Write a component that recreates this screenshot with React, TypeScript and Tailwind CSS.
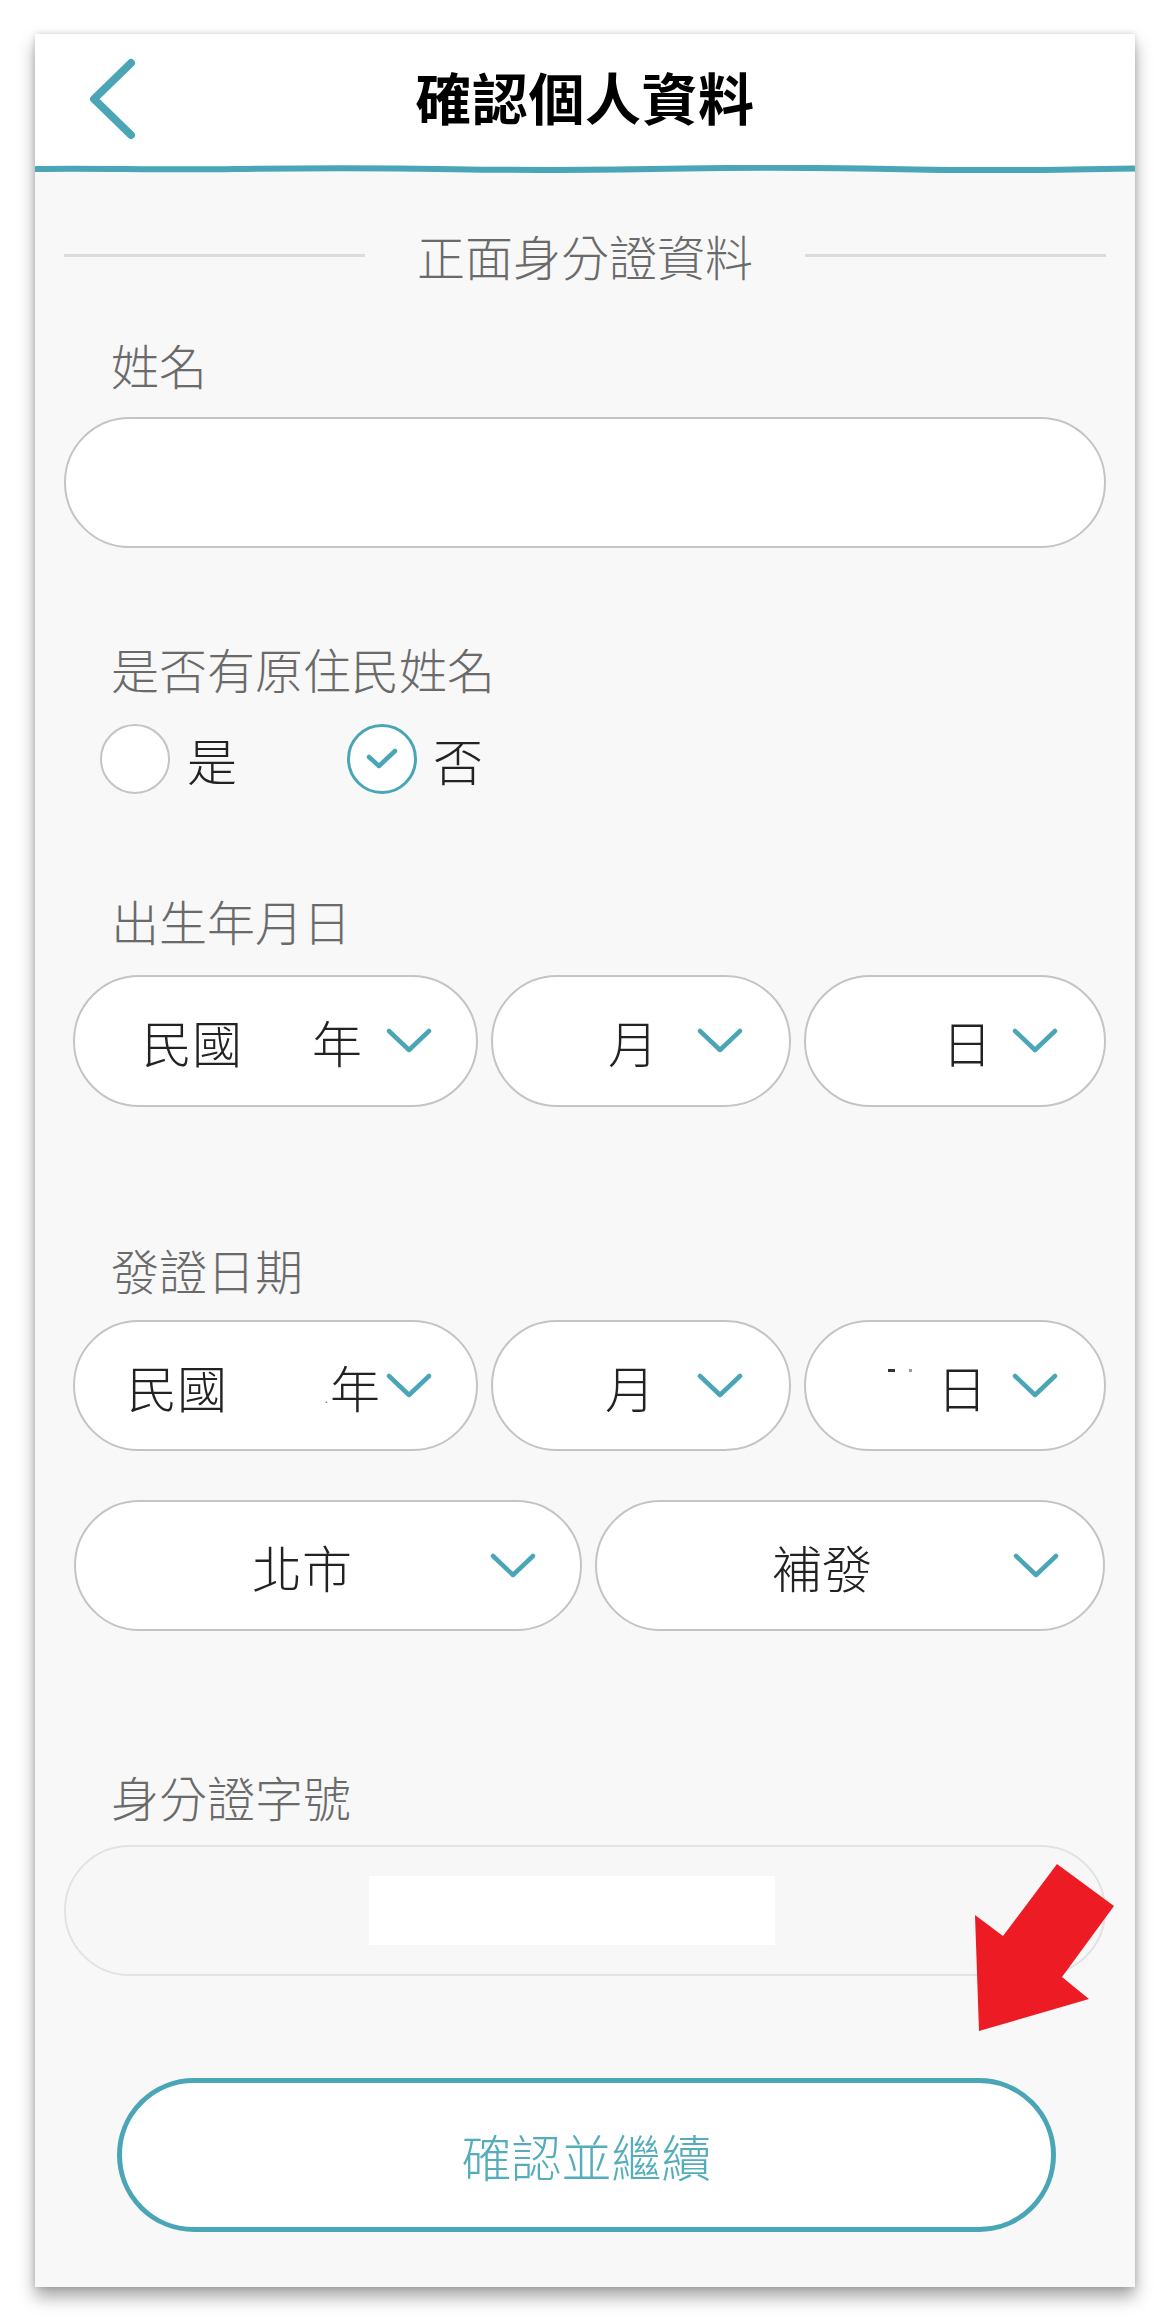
import React from "react";

const TEAL = "#4aa6b6";

function Chevron() {
  return (
    <svg width="46" height="26" viewBox="0 0 46 26" className="shrink-0">
      <path d="M3 3 L23 22 L43 3" fill="none" stroke={TEAL} strokeWidth="4.5" strokeLinecap="round" strokeLinejoin="round" />
    </svg>
  );
}

const pill = "flex items-center h-full bg-white border-2 border-[#c4c4c4] rounded-full text-[50px] leading-none text-[#222] font-[300]";
const label = "h-[50px] flex items-center pl-[47px] text-[48px] leading-none text-[#6a6a6a] font-[300]";

export default function App() {
  return (
    <div
      className="w-[1170px] h-[2324px] bg-white pt-[34px] pl-[35px]"
      style={{ fontFamily: '"Noto Sans CJK TC", "Noto Sans", sans-serif' }}
    >
      <div className="relative w-[1100px] h-[2253px] bg-[#f8f8f8] shadow-[0_10px_16px_rgba(0,0,0,0.35),0_0_6px_rgba(0,0,0,0.15)]">
        {/* header */}
        <div className="h-[134px] bg-white grid grid-cols-[1fr_auto_1fr] items-center">
          <div className="pl-[54px] -mt-[4px]">
            <svg width="48" height="82" viewBox="0 0 48 82">
              <path d="M42 5 L5 41 L42 77" fill="none" stroke={TEAL} strokeWidth="8" strokeLinecap="round" strokeLinejoin="round" />
            </svg>
          </div>
          <div className="text-[56px] font-bold text-black leading-none -mt-[10px] tracking-[0.5px]">確認個人資料</div>
          <div />
        </div>
        <svg width="1100" height="8" viewBox="0 0 1100 8" className="block -mt-[3px]" preserveAspectRatio="none">
          <path
            d="M0 4 C 60 2.8, 120 5.2, 200 4 S 330 2.6, 420 4.2 S 560 5.4, 650 3.6 S 800 2.8, 880 4.4 S 1020 5, 1100 3.4"
            fill="none"
            stroke={TEAL}
            strokeWidth="6"
          />
        </svg>

        <div className="px-[29px]">
          {/* divider */}
          <div className="mt-[57px] h-[50px] flex items-center">
            <div className="w-[301px] h-[3px] bg-[#dcdcdc]" />
            <div className="flex-1 text-center text-[48px] leading-none text-[#6a6a6a] font-[300]">正面身分證資料</div>
            <div className="w-[301px] h-[3px] bg-[#dcdcdc]" />
          </div>

          <div className={`${label} mt-[59px]`}>姓名</div>
          <div className="mt-[28px] h-[131px] bg-white border-2 border-[#c4c4c4] rounded-full" />

          <div className={`${label} mt-[95px]`}>是否有原住民姓名</div>
          <div className="mt-[31px] h-[70px] flex items-center pl-[36px] text-[50px] leading-none text-[#222] font-[300]">
            <div className="w-[70px] h-[70px] rounded-full bg-white border-2 border-[#c4c4c4]" />
            <span className="ml-[17px]">是</span>
            <div className="ml-[110px] w-[70px] h-[70px] rounded-full bg-white border-[3px] border-[#4aa6b6] flex items-center justify-center">
              <svg width="36" height="26" viewBox="0 0 36 26">
                <path d="M5 11 L15 20 L31 5" fill="none" stroke={TEAL} strokeWidth="4.5" strokeLinecap="round" strokeLinejoin="round" />
              </svg>
            </div>
            <span className="ml-[16px]">否</span>
          </div>

          <div className={`${label} mt-[101px]`}>出生年月日</div>
          <div className="mt-[30px] h-[132px] flex gap-[13px] pl-[9px]">
            <div className={`${pill} w-[405px] pl-[67px] pr-[44px]`}>
              <span>民國</span>
              <span className="ml-auto">年</span>
              <span className="ml-[24px]"><Chevron /></span>
            </div>
            <div className={`${pill} w-[300px] pl-[115px] pr-[46px]`}>
              <span>月</span>
              <span className="ml-auto"><Chevron /></span>
            </div>
            <div className={`${pill} w-[302px] pl-[136px] pr-[46px]`}>
              <span>日</span>
              <span className="ml-auto"><Chevron /></span>
            </div>
          </div>

          <div className={`${label} mt-[137px]`}>發證日期</div>
          <div className="mt-[26px] h-[131px] flex gap-[13px] pl-[9px]">
            <div className={`${pill} w-[405px] pl-[52px] pr-[44px]`}>
              <span>民國</span>
              <span className="ml-auto text-[14px] text-[#666] self-center mt-[22px] mr-[2px]">.</span>
              <span>年</span>
              <span className="ml-[6px]"><Chevron /></span>
            </div>
            <div className={`${pill} w-[300px] pl-[112px] pr-[46px]`}>
              <span>月</span>
              <span className="ml-auto"><Chevron /></span>
            </div>
            <div className={`${pill} w-[302px] pl-[82px] pr-[46px]`}>
              <span className="flex items-center gap-[14px] -mt-[30px]">
                <span className="w-[7px] h-[3px] bg-[#333]" />
                <span className="w-[3px] h-[3px] bg-[#999]" />
              </span>
              <span className="ml-[25px]">日</span>
              <span className="ml-auto"><Chevron /></span>
            </div>
          </div>

          <div className="mt-[49px] h-[131px] flex gap-[13px] pl-[10px]">
            <div className={`${pill} w-[508px] pl-[176px] pr-[44px]`}>
              <span>北市</span>
              <span className="ml-auto"><Chevron /></span>
            </div>
            <div className={`${pill} w-[510px] pl-[175px] pr-[44px]`}>
              <span>補發</span>
              <span className="ml-auto"><Chevron /></span>
            </div>
          </div>

          <div className={`${label} mt-[140px]`}>身分證字號</div>
          <div className="mt-[24px] h-[131px] bg-[#f7f7f7] border-2 border-[#e2e2e2] rounded-full flex items-center pl-[303px]">
            <div className="w-[406px] h-[69px] bg-white" />
          </div>

          <div className="mt-[102px] flex pl-[53px]">
            <div className="w-[939px] h-[154px] bg-white border-[5px] border-[#4aa6b6] rounded-full flex items-center justify-center text-[50px] leading-none text-[#55adbb] font-[300]">
              確認並繼續
            </div>
          </div>
        </div>

        {/* red annotation arrow */}
        <svg className="absolute left-[930px] top-[1820px]" width="160" height="190" viewBox="0 0 160 190">
          <polygon points="92,10 149,52 97,123 124,145 14,177 10,61 38,82" fill="#ed1c24" />
        </svg>
      </div>
    </div>
  );
}
